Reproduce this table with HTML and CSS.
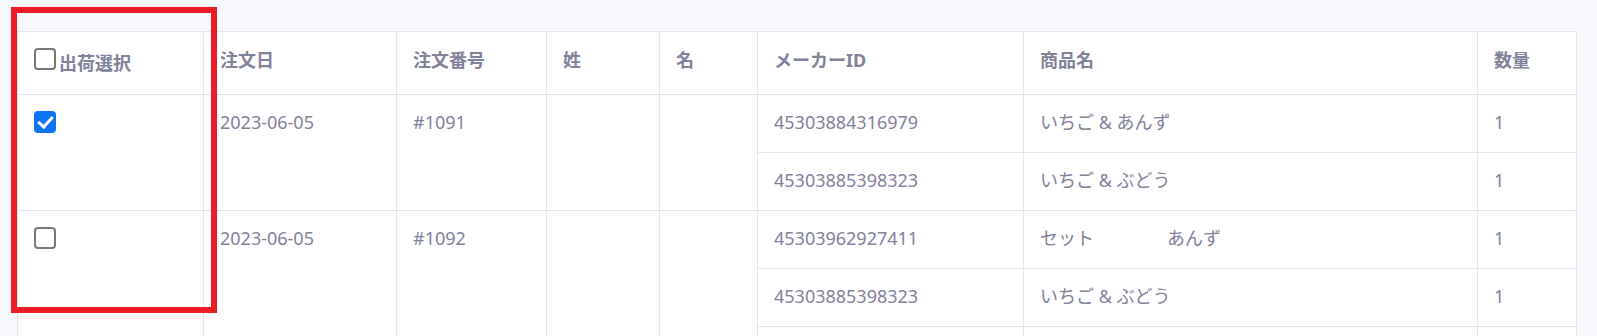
FILE: index.html
```html
<!DOCTYPE html>
<html lang="ja">
<head>
<meta charset="utf-8">
<title>出荷選択</title>
<link rel="stylesheet" href="styles.css">
</head>
<body>
<div class="page">
  <table class="orders">
    <colgroup>
      <col class="c-sel">
      <col class="c-date">
      <col class="c-no">
      <col class="c-last">
      <col class="c-first">
      <col class="c-maker">
      <col class="c-name">
      <col class="c-qty">
    </colgroup>
    <thead>
      <tr>
        <th class="th-sel"><label class="head-sel"><input type="checkbox" class="chk chk-head">出荷選択</label></th>
        <th>注文日</th>
        <th>注文番号</th>
        <th>姓</th>
        <th>名</th>
        <th>メーカーID</th>
        <th>商品名</th>
        <th>数量</th>
      </tr>
    </thead>
    <tbody>
      <tr>
        <td rowspan="2"><input type="checkbox" class="chk chk-row" checked></td>
        <td rowspan="2">2023-06-05</td>
        <td rowspan="2">#1091</td>
        <td rowspan="2"></td>
        <td rowspan="2"></td>
        <td>45303884316979</td>
        <td>いちご &amp; あんず</td>
        <td>1</td>
      </tr>
      <tr>
        <td>45303885398323</td>
        <td>いちご &amp; ぶどう</td>
        <td>1</td>
      </tr>
      <tr>
        <td rowspan="3"><input type="checkbox" class="chk chk-row"></td>
        <td rowspan="3">2023-06-05</td>
        <td rowspan="3">#1092</td>
        <td rowspan="3"></td>
        <td rowspan="3"></td>
        <td>45303962927411</td>
        <td>セット<span class="masked"></span>あんず</td>
        <td>1</td>
      </tr>
      <tr>
        <td>45303885398323</td>
        <td>いちご &amp; ぶどう</td>
        <td>1</td>
      </tr>
      <tr class="row-more">
        <td></td>
        <td></td>
        <td></td>
      </tr>
    </tbody>
  </table>
  <div class="highlight"></div>
</div>
</body>
</html>
```

FILE: styles.css
```css
html, body {
  margin: 0;
  padding: 0;
  overflow: hidden;
  background: #f7f8fc;
}

body {
  font-family: "Noto Sans", "Noto Sans CJK JP", sans-serif;
  font-size: 18px;
  color: #7f8298;
}

.page {
  position: relative;
  padding: 31px 21px 0 17px;
}

.orders {
  table-layout: fixed;
  width: 1559px;
  border-collapse: collapse;
  background: #ffffff;
}

.c-sel { width: 186px; }
.c-date { width: 193px; }
.c-no { width: 150px; }
.c-last { width: 113px; }
.c-first { width: 98px; }
.c-maker { width: 266px; }
.c-name { width: 454px; }
.c-qty { width: 99px; }

.orders th,
.orders td {
  border: 1px solid #e3e4f0;
  text-align: left;
  white-space: nowrap;
}

.orders th {
  padding: 15px 15px 21px 16px;
  line-height: 26px;
  font-weight: 700;
  vertical-align: top;
}

.orders th.th-sel {
  padding: 16px 15px 18px 16px;
}

.orders td {
  padding: 15px 15px 17px 16px;
  line-height: 25px;
  vertical-align: top;
}

.row-more td {
  height: 25px;
}

.chk {
  -webkit-appearance: none;
  appearance: none;
  position: relative;
  box-sizing: border-box;
  width: 22px;
  height: 22px;
  margin: 0;
  border: 2px solid #777777;
  border-radius: 4px;
  background: #ffffff;
}

.chk:checked {
  background: #0a74f5;
  border-color: #0a74f5;
}

.chk:checked::after {
  content: "";
  position: absolute;
  left: 5px;
  top: 0;
  width: 6px;
  height: 12px;
  border-right: 3px solid #ffffff;
  border-bottom: 3px solid #ffffff;
  transform: rotate(42deg);
}

.chk-head {
  margin: 0 3px 0 0;
  vertical-align: baseline;
}

.chk-row {
  display: block;
  margin-top: 1px;
}

.masked {
  display: inline-block;
  width: 73px;
}

.highlight {
  position: absolute;
  left: 11px;
  top: 7px;
  width: 194px;
  height: 294px;
  border: 6px solid #ec1c24;
  pointer-events: none;
}
```
